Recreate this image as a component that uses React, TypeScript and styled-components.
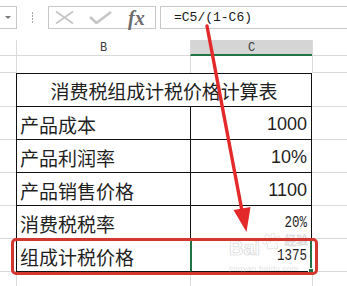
import React from "react";
import styled, { createGlobalStyle } from "styled-components";

const GRID = "#d9d9d9";
const INK = "#111";
const EXCEL_GREEN = "#217346";

const Global = createGlobalStyle`
  html, body {
    margin: 0;
    padding: 0;
    background: #fff;
  }
  body {
    width: 347px;
    height: 286px;
    overflow: hidden;
    font-family: "Noto Sans CJK SC", "Noto Sans", sans-serif;
    color: #1d1d1d;
  }
`;

const Screen = styled.div`
  position: relative;
  width: 347px;
  height: 286px;
  overflow: hidden;
  background: #fff;
`;

/* ---------- formula bar ---------- */

const Toolbar = styled.div`
  display: flex;
  align-items: flex-start;
  height: 40px;
  padding-top: 6px;
  box-sizing: border-box;
`;

const NameBox = styled.div`
  width: 17px;
  height: 23px;
  box-sizing: border-box;
  border: 1px solid #c8c8c8;
  border-left: none;
  display: flex;
  align-items: center;
  padding-left: 5px;
`;

const Caret = styled.span`
  width: 0;
  height: 0;
  border-left: 3px solid transparent;
  border-right: 3px solid transparent;
  border-top: 3px solid #7a7a7a;
`;

const Grip = styled.div`
  width: 31px;
  height: 23px;
  display: flex;
  flex-direction: column;
  align-items: center;
  justify-content: center;
  gap: 1.5px;
`;

const GripDot = styled.span`
  width: 1.5px;
  height: 1.5px;
  background: #a5a5a5;
`;

const FxBox = styled.div`
  width: 108px;
  height: 23px;
  box-sizing: border-box;
  border: 1px solid #c8c8c8;
  display: flex;
  align-items: center;
  padding-left: 6px;
`;

const ToolIcon = styled.svg<{ $gap: number }>`
  display: block;
  flex: none;
  margin-right: ${(p) => p.$gap}px;
`;

const FxLabel = styled.span`
  font-family: "Liberation Serif", "DejaVu Serif", serif;
  font-style: italic;
  font-weight: bold;
  font-size: 20px;
  line-height: 1;
  color: #6b6b6b;
  margin-top: 1px;
`;

const FormulaBox = styled.div`
  flex: 1;
  margin-left: 4px;
  margin-right: -4px;
  height: 23px;
  box-sizing: border-box;
  border: 1px solid #c8c8c8;
  padding-left: 13px;
  font-family: "Liberation Mono", "DejaVu Sans Mono", monospace;
  font-size: 13px;
  line-height: 21px;
  color: #1a1a1a;
`;

/* ---------- sheet ---------- */

const Sheet = styled.div`
  display: grid;
  grid-template-columns: 16px 174px 122px 1fr;
  grid-template-rows: 16px 17px 34px repeat(5, 33px) 1fr;
  height: 246px;
`;

const Corner = styled.div`
  box-sizing: border-box;
  border-bottom: 1px solid ${GRID};
`;

const ColHead = styled.div<{ $active?: boolean }>`
  box-sizing: border-box;
  display: flex;
  align-items: center;
  justify-content: center;
  border-left: 1px solid ${GRID};
  border-bottom: ${(p) => (p.$active ? `2px solid ${EXCEL_GREEN}` : `1px solid ${GRID}`)};
  background: ${(p) => (p.$active ? "#d5d5d5" : "#fff")};
  font-family: "Liberation Mono", "DejaVu Sans Mono", monospace;
  font-size: 12px;
  color: #3a3a3a;
  padding-top: ${(p) => (p.$active ? 1 : 0)}px;
`;

const RowHead = styled.div<{ $line?: boolean }>`
  box-sizing: border-box;
  border-bottom: ${(p) => (p.$line === false ? "none" : `1px solid ${GRID}`)};
`;

const Blank = styled.div<{ $left?: boolean; $bottom?: boolean }>`
  box-sizing: border-box;
  border-left: ${(p) => (p.$left ? `1px solid ${GRID}` : "none")};
  border-bottom: ${(p) => (p.$bottom ? `1px solid ${GRID}` : "none")};
`;

const TitleCell = styled.div`
  grid-column: span 2;
  box-sizing: border-box;
  border: 1px solid ${INK};
  display: flex;
  align-items: center;
  justify-content: center;
  font-size: 19px;
  letter-spacing: -0.1px;
  color: #1f1f1f;
  padding-top: 1px;
`;

const LabelCell = styled.div`
  box-sizing: border-box;
  border-left: 1px solid ${INK};
  border-bottom: 1px solid ${INK};
  display: flex;
  align-items: center;
  padding-left: 3px;
  padding-top: 3px;
  font-size: 19px;
  color: #1f1f1f;
  white-space: nowrap;
`;

const ValueCell = styled.div<{ $active?: boolean }>`
  position: relative;
  box-sizing: border-box;
  border-left: ${(p) => (p.$active ? `2px solid ${EXCEL_GREEN}` : `1px solid ${INK}`)};
  border-right: ${(p) => (p.$active ? `2px solid ${EXCEL_GREEN}` : `1px solid ${INK}`)};
  border-bottom: 1px solid ${INK};
  display: flex;
  align-items: center;
  justify-content: flex-end;
  padding-right: ${(p) => (p.$active ? 3 : 4)}px;
  padding-top: 3px;

  &::after {
    content: "";
    display: ${(p) => (p.$active ? "block" : "none")};
    position: absolute;
    right: -4px;
    bottom: -3px;
    width: 4px;
    height: 4px;
    background: ${EXCEL_GREEN};
    border: 1px solid #fff;
  }
`;

const Amount = styled.span`
  font-family: "Liberation Sans", Arial, sans-serif;
  font-size: 18px;
  color: #1f1f1f;
`;

const FormulaResult = styled.span`
  display: inline-block;
  font-family: "Liberation Mono", "DejaVu Sans Mono", monospace;
  font-size: 12.5px;
  line-height: 1;
  color: #1f1f1f;
  transform: scaleY(1.3);
  transform-origin: center;
`;

/* ---------- annotation layer ---------- */

const Highlight = styled.div`
  position: absolute;
  left: 11px;
  top: 238px;
  width: 307px;
  height: 37px;
  box-sizing: border-box;
  border: 3px solid #d4372f;
  border-radius: 5px;
  pointer-events: none;
`;

const Overlay = styled.svg`
  position: absolute;
  left: 0;
  top: 0;
  pointer-events: none;
`;

const Watermark = styled.div`
  position: absolute;
  left: 229px;
  top: 233px;
  display: grid;
  grid-template-columns: auto auto auto;
  align-items: start;
  column-gap: 2px;
  opacity: 0.4;
  pointer-events: none;
`;

const MarkWord = styled.span`
  font-family: "Liberation Sans", Arial, sans-serif;
  font-weight: bold;
  font-size: 20px;
  line-height: 1;
  margin-top: 5px;
  color: #fff;
  -webkit-text-stroke: 0.7px #9a9a9a;
`;

const MarkCn = styled.span`
  font-size: 12px;
  line-height: 1;
  margin-top: 1px;
  color: #fff;
  -webkit-text-stroke: 0.6px #9a9a9a;
`;

const MarkUrl = styled.span`
  grid-column: 1 / span 3;
  font-family: "Liberation Sans", Arial, sans-serif;
  font-size: 8px;
  line-height: 1;
  margin-top: 7px;
  color: #b5b5b5;
  letter-spacing: 0.3px;
`;

const rows: { label: string; value: string; mono?: boolean; active?: boolean }[] = [
  { label: "产品成本", value: "1000" },
  { label: "产品利润率", value: "10%" },
  { label: "产品销售价格", value: "1100" },
  { label: "消费税税率", value: "20%", mono: true },
  { label: "组成计税价格", value: "1375", mono: true, active: true },
];

export default function App() {
  return (
    <Screen>
      <Global />
      <Toolbar>
        <NameBox>
          <Caret />
        </NameBox>
        <Grip>
          <GripDot />
          <GripDot />
          <GripDot />
          <GripDot />
        </Grip>
        <FxBox>
          <ToolIcon $gap={15} width="19" height="13" viewBox="0 0 19 13">
            <path d="M1 0.5 L18 12.5 M18 0.5 L1 12.5" stroke="#c6c6c6" strokeWidth="1.8" fill="none" />
          </ToolIcon>
          <ToolIcon $gap={16} width="23" height="13" viewBox="0 0 23 13">
            <path d="M1 6 L7.5 12 L22 1" stroke="#c6c6c6" strokeWidth="2.6" fill="none" strokeLinejoin="round" />
          </ToolIcon>
          <FxLabel>fx</FxLabel>
        </FxBox>
        <FormulaBox>=C5/(1-C6)</FormulaBox>
      </Toolbar>

      <Sheet>
        <Corner />
        <ColHead>B</ColHead>
        <ColHead $active>C</ColHead>
        <ColHead />

        <RowHead />
        <Blank $left />
        <Blank $left />
        <Blank $left $bottom />

        <RowHead />
        <TitleCell>消费税组成计税价格计算表</TitleCell>
        <Blank $bottom />

        {rows.map((r) => (
          <React.Fragment key={r.label}>
            <RowHead />
            <LabelCell>{r.label}</LabelCell>
            <ValueCell $active={r.active}>
              {r.mono ? <FormulaResult>{r.value}</FormulaResult> : <Amount>{r.value}</Amount>}
            </ValueCell>
            <Blank $bottom />
          </React.Fragment>
        ))}

        <RowHead $line={false} />
        <Blank $left />
        <Blank $left />
        <Blank $left />
      </Sheet>

      <Watermark>
        <MarkWord>Bai</MarkWord>
        <svg width="20" height="17" viewBox="0 0 24 21">
          <g fill="#fff" stroke="#9a9a9a" strokeWidth="0.9">
            <ellipse cx="6" cy="5" rx="2.6" ry="3.2" />
            <ellipse cx="13" cy="3.5" rx="2.6" ry="3.2" />
            <ellipse cx="19.5" cy="7" rx="2.4" ry="3" />
            <ellipse cx="3" cy="11" rx="2.3" ry="2.8" />
            <path d="M6 18 C6 12 10 9.5 12.5 9.5 C15 9.5 19 12 19 18 C19 20 16 20 12.5 19 C9 20 6 20 6 18 Z" />
          </g>
        </svg>
        <MarkCn>经验</MarkCn>
        <MarkUrl>jingyan.baidu.com</MarkUrl>
      </Watermark>

      <Highlight />

      <Overlay width="347" height="286" viewBox="0 0 347 286">
        <line x1="207" y1="26" x2="242" y2="211" stroke="#e4292b" strokeWidth="3.4" strokeLinecap="round" />
        <polygon points="233.5,210 250.5,207 246.5,232" fill="#e4292b" />
      </Overlay>
    </Screen>
  );
}
